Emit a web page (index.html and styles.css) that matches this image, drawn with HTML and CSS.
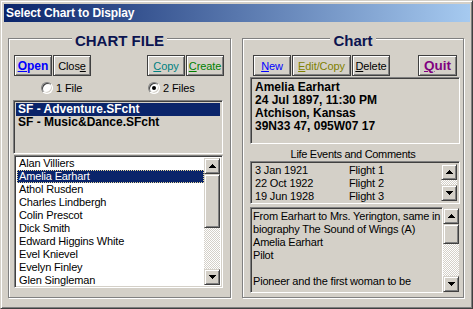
FILE: index.html
```html
<!DOCTYPE html>
<html>
<head>
<meta charset="utf-8">
<link rel="stylesheet" href="styles.css">
</head>
<body>
<div class="window">
  <div class="titlebar">Select Chart to Display</div>
  <div class="body">
    <section class="group group-left">
      <h2 class="group-title">CHART FILE</h2>
      <div class="btnrow btnrow-left">
        <button class="btn c-open"><u>O</u>pen</button>
        <button class="btn c-close">Clos<u>e</u></button>
        <button class="btn c-copy push"><u>C</u>opy</button>
        <button class="btn c-create"><u>C</u>reate</button>
      </div>
      <div class="radios">
        <label class="radio r1"><span class="rb"></span>1 File</label>
        <label class="radio"><span class="rb checked"></span>2 Files</label>
      </div>
      <ul class="sunken files">
        <li class="sel">SF - Adventure.SFcht</li>
        <li>SF - Music&amp;Dance.SFcht</li>
      </ul>
      <div class="sunken names">
        <ul class="items">
          <li>Alan Villiers</li>
          <li class="sel focus">Amelia Earhart</li>
          <li>Athol Rusden</li>
          <li>Charles Lindbergh</li>
          <li>Colin Prescot</li>
          <li>Dick Smith</li>
          <li>Edward Higgins White</li>
          <li>Evel Knievel</li>
          <li>Evelyn Finley</li>
          <li>Glen Singleman</li>
        </ul>
        <div class="vscroll">
          <div class="sbtn"><svg width="7" height="4" viewBox="0 0 7 4"><path d="M3 0h1v1h1v1h1v1h1v1H0V3h1V2h1V1h1z"/></svg></div>
          <div class="thumb t-names"></div>
          <div class="track"></div>
          <div class="sbtn"><svg width="7" height="4" viewBox="0 0 7 4"><path d="M0 0h7v1H6v1H5v1H4v1H3V3H2V2H1V1H0z"/></svg></div>
        </div>
      </div>
    </section>

    <section class="group group-right">
      <h2 class="group-title">Chart</h2>
      <div class="btnrow btnrow-right">
        <button class="btn c-new"><u>N</u>ew</button>
        <button class="btn c-edit w-edit"><u>E</u>dit/Copy</button>
        <button class="btn c-delete"><u>D</u>elete</button>
        <button class="btn c-quit push w-quit"><u>Q</u>uit</button>
      </div>
      <div class="sunken info">
        <div>Amelia Earhart</div>
        <div>24 Jul 1897, 11:30 PM</div>
        <div>Atchison, Kansas</div>
        <div>39N33 47, 095W07 17</div>
      </div>
      <div class="caption">Life Events and Comments</div>
      <div class="sunken events">
        <ul class="ev-items">
          <li><span class="ev-date">3 Jan 1921</span><span>Flight 1</span></li>
          <li><span class="ev-date">22 Oct 1922</span><span>Flight 2</span></li>
          <li><span class="ev-date">19 Jun 1928</span><span>Flight 3</span></li>
        </ul>
        <div class="vscroll">
          <div class="sbtn"><svg width="7" height="4" viewBox="0 0 7 4"><path d="M3 0h1v1h1v1h1v1h1v1H0V3h1V2h1V1h1z"/></svg></div>
          <div class="track"></div>
          <div class="sbtn"><svg width="7" height="4" viewBox="0 0 7 4"><path d="M0 0h7v1H6v1H5v1H4v1H3V3H2V2H1V1H0z"/></svg></div>
        </div>
      </div>
      <div class="comments-row">
        <div class="sunken comments">
          <div>From Earhart to Mrs. Yerington, same in</div>
          <div>biography The Sound of Wings (A)</div>
          <div>Amelia Earhart</div>
          <div>Pilot</div>
          <div>&nbsp;</div>
          <div>Pioneer and the first woman to be</div>
        </div>
        <div class="vscroll c-scroll">
          <div class="sbtn"><svg width="7" height="4" viewBox="0 0 7 4"><path d="M3 0h1v1h1v1h1v1h1v1H0V3h1V2h1V1h1z"/></svg></div>
          <div class="thumb t-comments"></div>
          <div class="track"></div>
          <div class="sbtn"><svg width="7" height="4" viewBox="0 0 7 4"><path d="M0 0h7v1H6v1H5v1H4v1H3V3H2V2H1V1H0z"/></svg></div>
        </div>
      </div>
    </section>
  </div>
</div>
</body>
</html>
```

FILE: styles.css
```css
* { box-sizing: border-box; margin: 0; padding: 0; }
ul { list-style: none; }

body {
  width: 473px;
  height: 309px;
  overflow: hidden;
  background: #d4d0c8;
  font-family: "Liberation Sans", Arial, sans-serif;
  font-size: 11px;
  color: #000;
}

.window {
  width: 473px;
  height: 309px;
  border: 1px solid;
  border-color: #d4d0c8 #404040 #404040 #d4d0c8;
  box-shadow: inset 1px 1px #fff, inset -1px -1px #808080;
  padding: 3px 2px 2px 3px;
  background: #d4d0c8;
  display: flex;
  flex-direction: column;
}

.titlebar {
  height: 18px;
  line-height: 18px;
  padding-left: 2px;
  background: linear-gradient(90deg, #0a246a, #a6caf0);
  color: #fff;
  font-weight: bold;
  font-size: 12px;
  letter-spacing: -0.1px;
}

.body {
  display: flex;
  padding: 16px 0 0 4px;
}

.group {
  height: 260px;
  border: 1px solid #808080;
  box-shadow: inset 1px 1px #fff, 1px 1px #fff;
  display: flex;
  flex-direction: column;
}
.group-left { width: 223px; }
.group-right { width: 222px; margin-left: 11px; }

.group-title {
  align-self: center;
  margin-top: -7px;
  height: 18px;
  line-height: 18px;
  padding: 0 3px;
  background: #d4d0c8;
  font-size: 15px;
  font-weight: bold;
  color: #0c1450;
}

.btnrow { display: flex; gap: 1px; margin-top: 5px; }
.btnrow-left { padding: 0 6px 0 5px; }
.btnrow-right { padding: 0 6px 0 10px; }
.push { margin-left: auto; }

.btn {
  width: 38px;
  height: 21px;
  border: 1px solid #404040;
  box-shadow: inset 1px 1px #fff, inset -1px -1px #808080;
  background: #d4d0c8;
  font-family: "Liberation Sans", Arial, sans-serif;
  font-size: 11px;
  letter-spacing: -0.1px;
  display: flex;
  align-items: center;
  justify-content: center;
}
.w-edit { width: 59px; }
.w-quit { width: 39px; }

.c-open { color: #0000ff; font-weight: bold; font-size: 12px; letter-spacing: 0; }
.c-close { color: #000; }
.c-copy { color: #008080; }
.c-create { color: #008000; }
.c-new { color: #0000ff; }
.c-edit { color: #808000; }
.c-delete { color: #000; }
.c-quit { color: #800080; font-weight: bold; font-size: 13.5px; letter-spacing: 0; }

.radios {
  display: flex;
  align-items: center;
  height: 14px;
  margin-top: 5px;
  padding-left: 32px;
}
.radio { display: flex; align-items: center; gap: 3px; font-size: 11px; letter-spacing: -0.1px; }
.r1 { width: 107px; }
.rb {
  width: 12px;
  height: 12px;
  border-radius: 50%;
  background: #fff;
  border: 1px solid;
  border-color: #808080 #fff #fff #808080;
  box-shadow: inset 1px 1px #404040, inset -1px -1px #d4d0c8;
  display: flex;
  align-items: center;
  justify-content: center;
}
.rb.checked::after {
  content: "";
  width: 4px;
  height: 4px;
  border-radius: 50%;
  background: #000;
}

.sunken {
  border: 1px solid;
  border-color: #808080 #fff #fff #808080;
  box-shadow: inset 1px 1px #404040, inset -1px -1px #d4d0c8;
  background: #d4d0c8;
}

.files {
  margin: 5px 0 0 4px;
  width: 210px;
  height: 54px;
  padding: 2px;
  font-size: 12px;
  font-weight: bold;
}
.files li { height: 13px; line-height: 13px; padding-left: 2px; }
.sel { background: #0a246a; color: #fff; }

.names {
  margin: 1px 0 0 5px;
  width: 209px;
  height: 133px;
  padding: 2px;
  background: #fff;
  display: flex;
  overflow: hidden;
}
.names .items { flex: 1; margin-top: -1px; font-size: 11px; letter-spacing: -0.15px; }
.names li { height: 13px; line-height: 13px; padding-left: 2px; white-space: nowrap; }
.focus { outline: 1px dotted #e8d89a; outline-offset: -1px; }

.vscroll { width: 16px; display: flex; flex-direction: column; flex: none; }
.sbtn, .thumb {
  background: #d4d0c8;
  border: 1px solid;
  border-color: #d4d0c8 #404040 #404040 #d4d0c8;
  box-shadow: inset 1px 1px #fff, inset -1px -1px #808080;
}
.sbtn {
  height: 16px;
  display: flex;
  align-items: center;
  justify-content: center;
  flex: none;
}
.sbtn svg { display: block; fill: #000; }
.track {
  flex: 1;
  background: repeating-conic-gradient(#fff 0 25%, #d4d0c8 0 50%) 0 0 / 2px 2px;
}
.t-names { height: 54px; flex: none; }
.t-comments { height: 20px; flex: none; }

.info {
  margin: 1px 0 0 7px;
  width: 210px;
  height: 67px;
  padding: 3px 0 0 4px;
  font-size: 12px;
  font-weight: bold;
  line-height: 13px;
}

.caption {
  margin-top: 4px;
  height: 13px;
  line-height: 13px;
  text-align: center;
  font-size: 11px;
  letter-spacing: -0.3px;
}

.events {
  margin-left: 7px;
  width: 210px;
  height: 43px;
  padding: 2px;
  display: flex;
}
.ev-items { flex: 1; font-size: 11px; letter-spacing: -0.15px; padding-left: 2px; }
.ev-items li { display: flex; height: 13px; line-height: 13px; }
.ev-date { width: 94px; }

.comments-row { display: flex; margin: 3px 0 0 7px; }
.comments {
  width: 193px;
  height: 86px;
  padding: 2px 0 0 2px;
  font-size: 11px;
  letter-spacing: -0.2px;
  line-height: 13px;
  white-space: nowrap;
  overflow: hidden;
}
.c-scroll { height: 84px; margin-top: 1px; }
```
